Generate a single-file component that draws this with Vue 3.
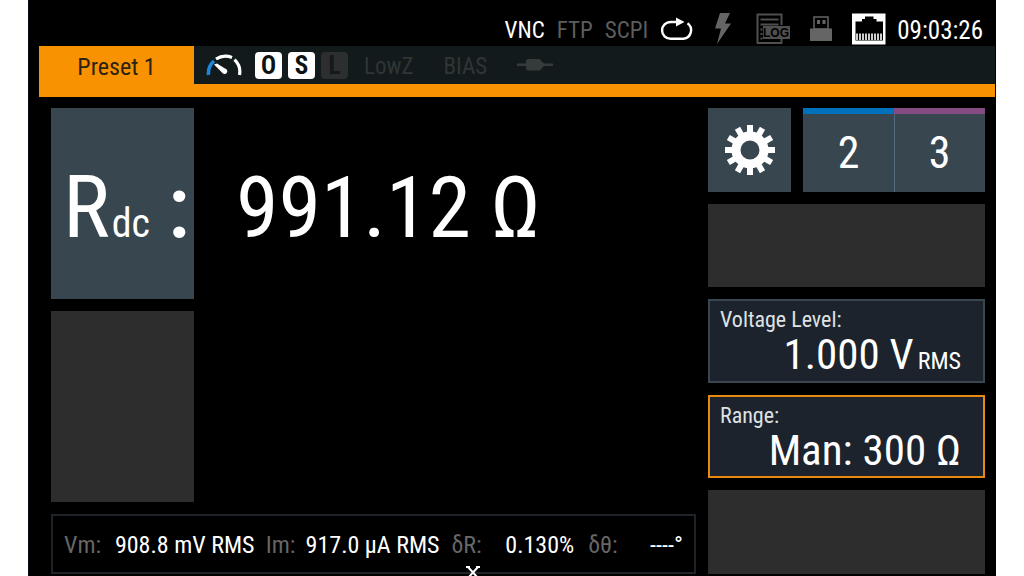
<script setup>
const protocols = [
  { name: 'VNC', on: true },
  { name: 'FTP', on: false },
  { name: 'SCPI', on: false },
]
const corrections = [
  { name: 'O', on: true },
  { name: 'S', on: true },
  { name: 'L', on: false },
]
const readings = [
  { label: 'Vm:', value: '908.8 mV RMS' },
  { label: 'Im:', value: '917.0 µA RMS' },
  { label: 'δR:', value: '0.130%' },
  { label: 'δθ:', value: '----°' },
]
const teeth = Array.from({ length: 12 }, (_, i) => i * 30)
</script>

<template>
  <div class="page">
    <div class="device">
      <header class="status">
        <span v-for="p in protocols" :key="p.name" class="proto" :class="{ on: p.on }">{{ p.name }}</span>
        <svg class="loop" width="34" height="26" viewBox="0 0 34 26" aria-hidden="true">
          <path d="M18 6H10.500a8.400 8.400 0 0 0 0 16.800H23.500a8.600 8.600 0 0 0 4-15.500" fill="none" stroke="#fff" stroke-width="2.400" />
          <path d="M16 1.500l8.500 4.500-8.500 4.500z" fill="#fff" />
        </svg>
        <svg class="bolt" width="16" height="32" viewBox="0 0 16 32" aria-hidden="true">
          <path d="M5 0H15L10 10.500H16L2 31 6 15.500H0z" fill="#656565" />
        </svg>
        <svg class="log" width="34" height="32" viewBox="0 0 34 32" aria-hidden="true">
          <path d="M25.500 12V1.500H1.500v28.500h24v-4" fill="none" stroke="#4f4f4f" stroke-width="2" />
          <path d="M4.500 6.500h18M4.500 11.500h18M4.500 16.500h2M4.500 21h2M4.500 25.500h2" stroke="#4f4f4f" stroke-width="2" />
          <rect x="7" y="13" width="27" height="13" fill="#4f4f4f" />
          <text x="20" y="24" text-anchor="middle" class="log-text">LOG</text>
        </svg>
        <svg class="usb" width="22" height="26" viewBox="0 0 22 26" aria-hidden="true">
          <rect x="4" y="1" width="14" height="12" fill="none" stroke="#656565" stroke-width="1.500" />
          <path d="M7 4h3v4H7zM12.500 4h3v4h-3z" fill="#656565" />
          <path d="M0 12.500h22v12.500H0z" fill="#656565" />
        </svg>
        <svg class="lan" width="34" height="32" viewBox="0 0 34 32" aria-hidden="true">
          <path d="M0 0.500h33.500v31H0z" fill="#fff" />
          <path d="M3.500 27.500v-19h6.500V6h3V3.500h8.500V6h3v2.500H31v19z" fill="#000" />
          <path d="M5 20.500v6.500M8 20.500v6.500M11 20.500v6.500M14 20.500v6.500M17 20.500v6.500M20 20.500v6.500M23 20.500v6.500M26 20.500v6.500M29 20.500v6.500" stroke="#fff" stroke-width="1.600" />
        </svg>
        <time class="clock">09:03:26</time>
      </header>

      <nav class="tabs">
        <button class="preset">Preset 1</button>
        <div class="flags">
          <svg class="gauge" width="36" height="24" viewBox="0 0 36 24" aria-hidden="true">
            <path d="M2.500 22A16.500 16.500 0 0 1 8 8" fill="none" stroke="#1c86d8" stroke-width="3.600" />
            <path d="M10 6A17.500 17.500 0 0 1 26 4.400M28.500 6.600A17 17 0 0 1 33.500 22" fill="none" stroke="#fff" stroke-width="3.200" />
            <path d="M8 11.500l3-1 8 5a2.800 2.800 0 1 1-3 4z" fill="#fff" />
          </svg>
          <div class="corrections">
            <span v-for="c in corrections" :key="c.name" class="chip" :class="{ on: c.on }">{{ c.name }}</span>
          </div>
          <span class="flag">LowZ</span>
          <span class="flag">BIAS</span>
          <svg class="plug" width="36" height="14" viewBox="0 0 36 14" aria-hidden="true">
            <path d="M0 5.500h9V2.500l1.500-1.500h12l1.500 1.500 3 3h9V8h-9l-3 3-1.500 1.500h-12L9 11V8H0z" fill="#353a3b" />
          </svg>
        </div>
      </nav>

      <main class="body">
        <section class="left">
          <div class="result">
            <button class="quantity"><span>R</span><span class="sub">dc</span><span class="colon">:</span></button>
            <output class="value">991.12 Ω</output>
          </div>
          <div class="slot half"></div>
          <dl class="readings">
            <template v-for="r in readings" :key="r.label">
              <dt>{{ r.label }}</dt>
              <dd>{{ r.value }}</dd>
            </template>
          </dl>
        </section>

        <aside class="side">
          <div class="top">
            <button class="gear" aria-label="Settings">
              <svg width="52" height="52" viewBox="-26 -26 52 52" aria-hidden="true">
                <rect v-for="a in teeth" :key="a" x="-3" y="-25" width="6" height="10" fill="#fff" :transform="`rotate(${a})`" />
                <circle r="14" fill="none" stroke="#fff" stroke-width="9" />
              </svg>
            </button>
            <div class="pair">
              <button class="num blue">2</button>
              <button class="num violet">3</button>
            </div>
          </div>
          <div class="slot"></div>
          <button class="param">
            <span class="param-name">Voltage Level:</span>
            <span class="param-value">1.000 V<small>RMS</small></span>
          </button>
          <button class="param selected">
            <span class="param-name">Range:</span>
            <span class="param-value">Man: 300 Ω</span>
          </button>
          <div class="slot"></div>
        </aside>
      </main>

      <svg class="pointer" width="14" height="12" viewBox="0 0 14 12" aria-hidden="true">
        <path d="M0 1h4M10 1h4M2 1l10 11M12 1L2 12" fill="none" stroke="#fff" stroke-width="2" />
      </svg>
    </div>
  </div>
</template>

<style>
body {
  background: #fff;
}
</style>

<style scoped>
* {
  box-sizing: border-box;
}
.page {
  padding: 0 28px;
  min-height: 100vh;
  display: flex;
  font-family: "Roboto Condensed", "Liberation Sans Narrow", sans-serif;
  font-size: 25px;
  line-height: 32px;
  color: #fff;
}
.device {
  flex: 1;
  display: flex;
  flex-direction: column;
  position: relative;
  overflow: hidden;
  background: #000;
  border-left: 1px solid #080b12;
  padding: 0 1px 2px 10px;
}
button {
  font: inherit;
  color: inherit;
  border: 0;
  padding: 0;
  margin: 0;
  border-radius: 0;
}
svg {
  display: block;
  flex: none;
}
.status {
  height: 46px;
  padding: 12px 12px 0 0;
  display: flex;
  justify-content: flex-end;
  align-items: center;
}
.proto {
  color: #5d5d5d;
  font-size: 23px;
  margin-right: 12px;
  padding-top: 4px;
}
.proto.on {
  color: #fff;
}
.bolt {
  margin-left: 21px;
}
.log {
  margin-left: 25px;
}
.log-text {
  font-family: "Liberation Sans", sans-serif;
  font-size: 12px;
  font-weight: 700;
  fill: #000;
}
.usb {
  margin-left: 20px;
}
.lan {
  margin-left: 20px;
}
.clock {
  margin-left: 11px;
  padding-top: 4px;
}
.tabs {
  height: 51px;
  display: flex;
  background: #121a1c;
  border-bottom: 13px solid #f99200;
}
.preset {
  width: 155px;
  background: #f99200;
  color: #2b2313;
  font-size: 24px;
  padding-top: 4px;
}
.flags {
  display: flex;
  align-items: center;
  padding-left: 12px;
}
.corrections {
  display: flex;
  gap: 6px;
  margin: 0 16px 0 13px;
}
.chip {
  width: 27px;
  height: 27px;
  border-radius: 4px;
  background: #2c2e2f;
  color: #15191a;
  font-size: 25px;
  font-weight: 700;
  line-height: 28px;
  text-align: center;
}
.chip.on {
  background: #fff;
  color: #0c1112;
}
.flag {
  color: #303536;
  font-size: 23px;
  margin-right: 30px;
  padding-top: 4px;
}
.body {
  flex: 1;
  display: flex;
  gap: 12px;
  padding: 11px 10px 0 12px;
}
.left {
  flex: 1;
  display: grid;
  grid-template-rows: 1fr 1fr 60px;
  gap: 12px;
}
.result {
  display: flex;
}
.quantity {
  width: 143px;
  padding: 24px 4px 0 12px;
  background: #38474f;
  display: flex;
  align-items: baseline;
  align-content: center;
  flex-wrap: wrap;
  font-size: 88px;
  line-height: 100px;
}
.sub {
  font-size: 40px;
  margin-left: 2px;
}
.colon {
  margin-left: auto;
  font-weight: 500;
}
.value {
  padding: 8px 0 0 42px;
  align-self: center;
  font-size: 86px;
  line-height: 100px;
  white-space: nowrap;
}
.slot {
  background: #2d2d2d;
}
.half {
  width: 143px;
}
.readings {
  margin: 0;
  padding: 2px 0 0 11px;
  border: 2px solid #1d2329;
  display: grid;
  grid-template-columns: 51fr 151fr 40fr 146fr 54fr 83fr 62fr 44fr;
  align-items: center;
  white-space: nowrap;
  font-size: 24px;
}
.readings > * {
  margin: 0;
  min-width: 0;
}
dt {
  color: #666;
}
.side {
  width: 277px;
  display: grid;
  grid-template-rows: repeat(5, 1fr);
  gap: 12px;
}
.top {
  display: flex;
  gap: 12px;
}
.gear {
  width: 83px;
  background: #38474f;
  display: flex;
  align-items: center;
  justify-content: center;
}
.pair {
  flex: 1;
  display: flex;
}
.num {
  flex: 1;
  background: #38474f;
  font-size: 44px;
  border-top: 6px solid #0072bc;
}
.num.violet {
  border-top-color: #864b83;
  box-shadow: inset 1px 0 0 #566b80;
}
.param {
  background: #1c232c;
  border: 2px solid #38474f;
  padding: 7px 22px 0 10px;
  display: flex;
  flex-direction: column;
  justify-content: flex-start;
  text-align: left;
  white-space: nowrap;
}
.param.selected {
  border-color: #e98a10;
}
.param-name {
  font-size: 22px;
  line-height: 24px;
  color: #dfe2e5;
}
.param-value {
  align-self: flex-end;
  font-size: 43px;
  line-height: 44px;
}
.param-value small {
  font-size: 24px;
  line-height: 24px;
  margin-left: 4px;
}
.pointer {
  position: absolute;
  left: 437px;
  bottom: -2px;
}
</style>
